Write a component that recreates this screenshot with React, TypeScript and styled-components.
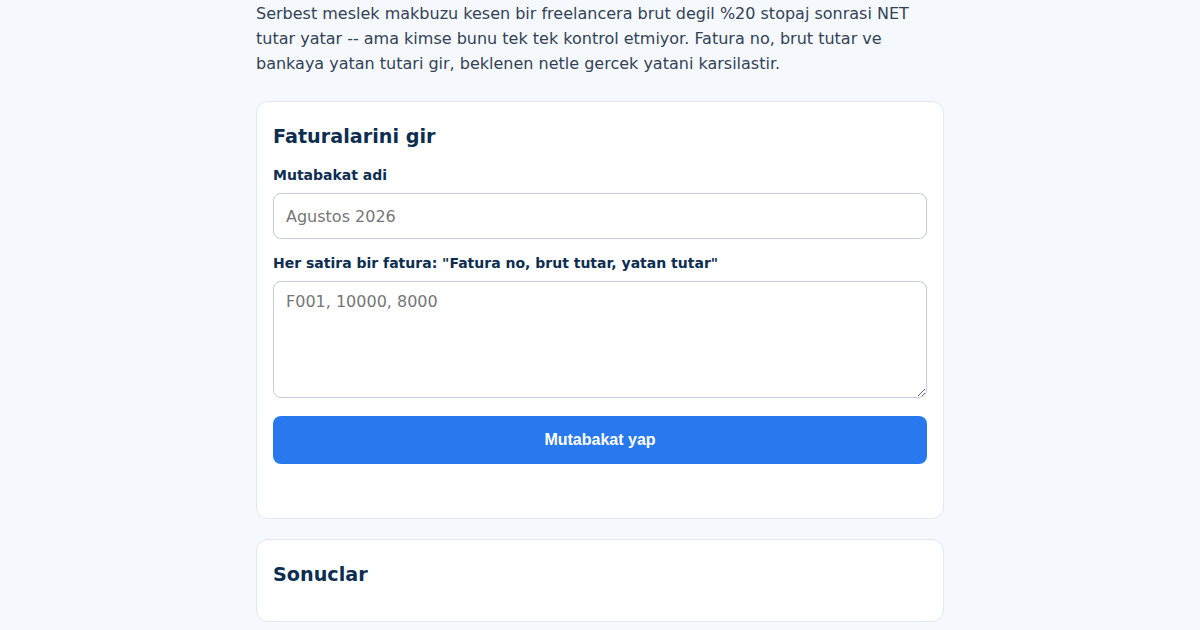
import styled, { createGlobalStyle } from 'styled-components'

const GlobalStyle = createGlobalStyle`
  html, body {
    margin: 0;
    padding: 0;
    background: #f5f9fd;
    font-family: "DejaVu Sans", sans-serif;
  }
  * {
    box-sizing: border-box;
  }
`

const Page = styled.main`
  width: 688px;
  margin: 0 auto;
  padding-top: 1px;
`

const Intro = styled.p`
  margin: 0 0 25px;
  font-size: 16px;
  line-height: 25px;
  color: #334155;
`

const Card = styled.section<{ $gap?: number }>`
  background: #ffffff;
  border: 1px solid #e2e8f0;
  border-radius: 12px;
  padding: 23px 16px 22px;
  margin-bottom: ${(p) => p.$gap ?? 20}px;
`

const Title = styled.h2`
  margin: 0;
  font-size: 19.2px;
  line-height: 23px;
  font-weight: 700;
  color: #0d2e50;
`

const Form = styled.form`
  display: flex;
  flex-direction: column;
  margin-top: 18px;
`

const Label = styled.label`
  display: block;
  font-size: 14px;
  line-height: 18px;
  font-weight: 700;
  color: #0d2e50;
  margin-bottom: 9px;
`

const Input = styled.input`
  width: 100%;
  height: 46px;
  padding: 0 12px;
  border: 1px solid #c3cddc;
  border-radius: 8px;
  font-family: "DejaVu Sans", sans-serif;
  font-size: 16px;
  color: #1e293b;
  margin-bottom: 15px;
  &::placeholder {
    color: #767676;
  }
`

const TextArea = styled.textarea`
  width: 100%;
  height: 117px;
  padding: 10px 12px;
  border: 1px solid #c3cddc;
  border-radius: 8px;
  font-family: "DejaVu Sans", sans-serif;
  font-size: 16px;
  line-height: 20px;
  color: #1e293b;
  margin: 0 0 18px;
  &::placeholder {
    color: #767676;
  }
`

const Button = styled.button`
  width: 100%;
  height: 48px;
  border: none;
  border-radius: 8px;
  background: #2879ed;
  color: #ffffff;
  font-family: "Liberation Sans", Arial, sans-serif;
  font-size: 16px;
  font-weight: 700;
  cursor: pointer;
`

const Status = styled.div<{ $h: number }>`
  min-height: ${(p) => p.$h}px;
`

export default function App() {
  return (
    <>
      <GlobalStyle />
      <Page>
        <Intro>
          Serbest meslek makbuzu kesen bir freelancera brut degil %20 stopaj sonrasi NET tutar
          yatar -- ama kimse bunu tek tek kontrol etmiyor. Fatura no, brut tutar ve bankaya yatan
          tutari gir, beklenen netle gercek yatani karsilastir.
        </Intro>

        <Card>
          <Title>Faturalarini gir</Title>
          <Form onSubmit={(e) => e.preventDefault()}>
            <Label htmlFor="name">Mutabakat adi</Label>
            <Input id="name" placeholder="Agustos 2026" />
            <Label htmlFor="rows">Her satira bir fatura: "Fatura no, brut tutar, yatan tutar"</Label>
            <TextArea id="rows" placeholder="F001, 10000, 8000" />
            <Button type="submit">Mutabakat yap</Button>
            <Status $h={32} />
          </Form>
        </Card>

        <Card>
          <Title>Sonuclar</Title>
          <Status $h={13} />
        </Card>
      </Page>
    </>
  )
}
